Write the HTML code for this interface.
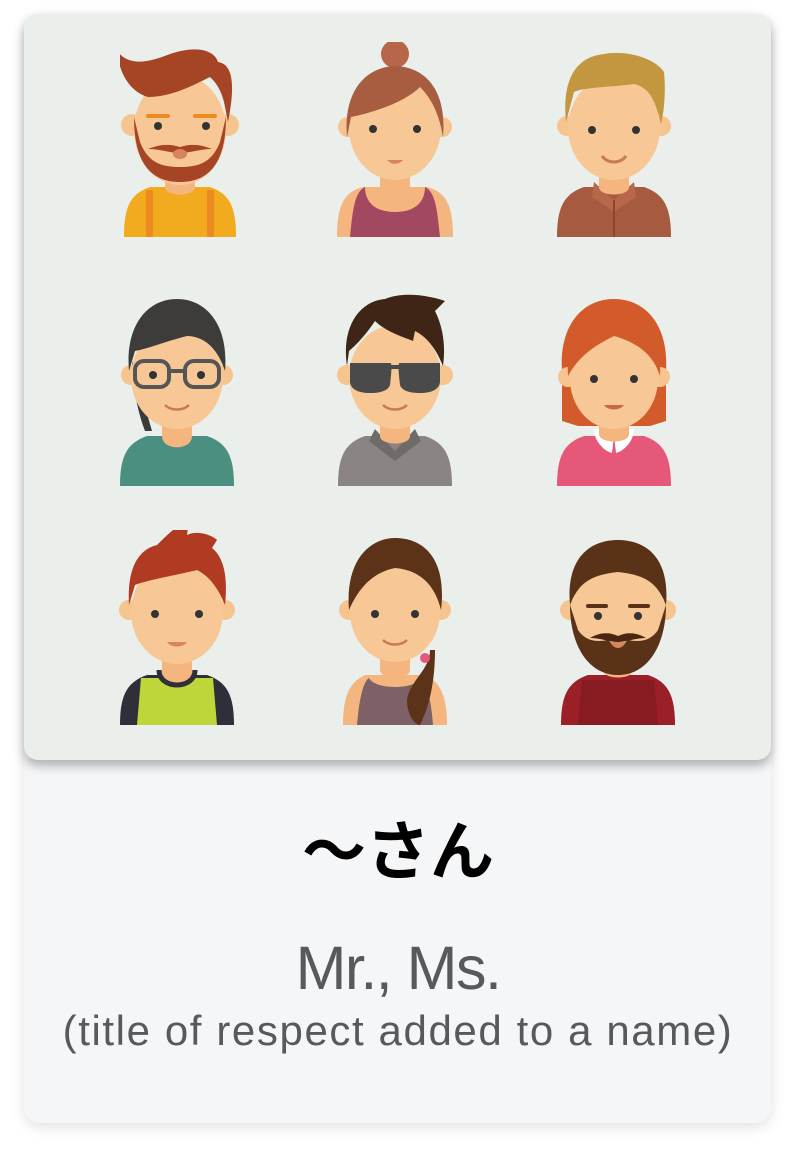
<!DOCTYPE html>
<html><head><meta charset="utf-8"><style>
body{margin:0;width:796px;height:1157px;background:#fff;position:relative;overflow:hidden;font-family:"Liberation Sans","Noto Sans CJK JP",sans-serif}
.card{position:absolute;left:24px;top:14px;width:747px;height:1109px;border-radius:16px;background:#f5f6f8;box-shadow:0 4px 14px rgba(0,0,0,.12)}
.top{position:absolute;left:24px;top:14px;width:747px;height:746px;border-radius:14px;background:#ebefec;box-shadow:0 6px 10px rgba(0,0,0,.28)}
svg.av{position:absolute;width:120px;height:195px}
.t1{position:absolute;left:0;width:796px;text-align:center;top:820px;font-size:64px;font-weight:bold;color:#000;line-height:1}
.t2{position:absolute;left:0;width:796px;text-align:center;top:938px;font-size:61px;color:#58595b;line-height:1;letter-spacing:-1.5px}
.t3{position:absolute;left:0;width:796px;text-align:center;top:1010px;font-size:42px;color:#58595b;line-height:1;letter-spacing:1.6px}
</style></head><body>
<div class="card"></div>
<div class="top"></div>

<!-- Row 1 -->
<svg class="av" style="left:120px;top:42px" viewBox="0 0 120 195">
<path d="M4 195C4 165 10 152 30 145L90 145C110 152 116 165 116 195Z" fill="#f2ab1f"/>
<rect x="26" y="148" width="7" height="47" fill="#ee8a22"/><rect x="87" y="148" width="7" height="47" fill="#ee8a22"/>
<path d="M45 118h30v27c0 10-30 10-30 0z" fill="#f5b57e"/>
<circle cx="12" cy="83" r="11" fill="#f6c48f"/><circle cx="108" cy="83" r="11" fill="#f6c48f"/>
<ellipse cx="60" cy="88" rx="46" ry="55" fill="#f7c895"/>
<path d="M14 75C14 120 30 140 60 140C90 140 106 120 106 75L100 100C92 120 80 125 60 125C40 125 28 120 20 100Z" fill="#a64426"/>
<path d="M-2 10C10 25 30 20 50 12C80 2 95 10 98 20C112 22 116 40 108 80L104 60C100 45 95 40 90 35C70 45 50 55 28 55C10 50 -2 30 -2 10Z" fill="#a64426"/>
<path d="M28 107c10-4 20-6 32-2c12-4 22-2 32 2c-12 0-22 4-32 4c-10 0-20-4-32-4z" fill="#a64426"/>
<ellipse cx="60" cy="112" rx="7" ry="5" fill="#d9845f"/>
<circle cx="38" cy="84" r="4" fill="#333"/><circle cx="86" cy="84" r="4" fill="#333"/>
<rect x="26" y="72" width="24" height="4" rx="2" fill="#ee8a22"/><rect x="73" y="72" width="24" height="4" rx="2" fill="#ee8a22"/>
</svg>

<svg class="av" style="left:335px;top:42px" viewBox="0 0 120 195">
<path d="M2 195C2 165 8 150 28 145L92 145C112 150 118 165 118 195Z" fill="#f5b57e"/>
<path d="M15 195C18 165 20 150 30 145C30 160 40 170 60 170C80 170 90 160 90 145C100 150 102 165 105 195Z" fill="#a34861"/>
<path d="M45 118h30v27c0 10-30 10-30 0z" fill="#f5b57e"/>
<circle cx="13" cy="85" r="10" fill="#f6c48f"/><circle cx="107" cy="85" r="10" fill="#f6c48f"/>
<ellipse cx="60" cy="86" rx="46" ry="52" fill="#f7c895"/>
<circle cx="60" cy="12" r="14" fill="#b8664a"/>
<path d="M12 95C8 50 30 25 60 24C92 25 112 50 108 95C104 70 95 55 85 45C70 60 40 70 16 75Z" fill="#a85c40"/>
<circle cx="38" cy="87" r="4" fill="#333"/><circle cx="82" cy="87" r="4" fill="#333"/>
<path d="M52 118c4 5 12 5 16 0z" fill="#d9845f"/>
</svg>

<svg class="av" style="left:554px;top:42px" viewBox="0 0 120 195">
<path d="M3 195C3 165 10 152 30 145L90 145C110 152 117 165 117 195Z" fill="#a65a40"/>
<path d="M40 140L60 158L80 140L82 155L60 170L38 155Z" fill="#b8674a"/>
<rect x="59" y="158" width="2" height="37" fill="#8c4530"/>
<path d="M45 118h30v27c0 10-30 10-30 0z" fill="#f5b57e"/>
<circle cx="13" cy="84" r="10" fill="#f6c48f"/><circle cx="107" cy="84" r="10" fill="#f6c48f"/>
<ellipse cx="60" cy="86" rx="46" ry="52" fill="#f7c895"/>
<path d="M12 80C8 40 20 15 50 12C70 8 100 15 110 30C112 50 110 70 107 82C102 60 95 45 80 42C60 45 30 45 20 50Z" fill="#c39640"/>
<circle cx="38" cy="88" r="4" fill="#333"/><circle cx="82" cy="88" r="4" fill="#333"/>
<path d="M48 114c6 8 18 8 24 0" stroke="#c77a55" stroke-width="3" fill="none"/>
</svg>

<!-- Row 2 -->
<svg class="av" style="left:117px;top:291px" viewBox="0 0 120 195">
<path d="M3 195C3 165 10 152 30 145L90 145C110 152 117 165 117 195Z" fill="#4a8f80"/>
<path d="M45 118h30v27c0 15-30 15-30 0z" fill="#f5b57e"/>
<circle cx="14" cy="84" r="10" fill="#f6c48f"/><circle cx="106" cy="84" r="10" fill="#f6c48f"/>
<path d="M28 140C20 120 15 90 15 70L35 140Z" fill="#3a3a3a"/>
<ellipse cx="60" cy="86" rx="46" ry="52" fill="#f7c895"/>
<path d="M12 80C8 35 30 8 60 8C90 8 112 35 108 80C100 55 85 45 70 45C50 50 30 58 18 60Z" fill="#3d3c3b"/>
<g fill="none" stroke="#555" stroke-width="4"><rect x="18" y="70" width="34" height="26" rx="9"/><rect x="68" y="70" width="34" height="26" rx="9"/><path d="M52 80h16"/></g>
<circle cx="36" cy="84" r="4" fill="#333"/><circle cx="84" cy="84" r="4" fill="#333"/>
<path d="M48 114c6 6 18 6 24 0" stroke="#c77a55" stroke-width="2.5" fill="none"/>
</svg>

<svg class="av" style="left:335px;top:291px" viewBox="0 0 120 195">
<path d="M3 195C3 165 10 152 30 145L90 145C110 152 117 165 117 195Z" fill="#8a8582"/>
<path d="M40 138L60 160L80 138L86 150L60 170L34 150Z" fill="#6f6b69"/>
<path d="M45 118h30v27c0 10-30 10-30 0z" fill="#f5b57e"/>
<circle cx="12" cy="84" r="10" fill="#f6c48f"/><circle cx="108" cy="84" r="10" fill="#f6c48f"/>
<ellipse cx="60" cy="86" rx="46" ry="52" fill="#f7c895"/>
<path d="M12 75C6 35 25 10 50 8C70 0 95 5 110 10L100 20C110 40 110 60 108 75C100 55 90 45 80 40L78 50C65 45 50 40 40 30C30 45 20 55 14 60Z" fill="#3f2516"/>
<path d="M15 72h40c2 0 2 4 0 22c-2 6-10 8-20 8c-12 0-20-4-20-12zM65 72h40v18c0 8-8 12-20 12c-10 0-18-2-20-8c-2-18-2-22 0-22z" fill="#4a4a4a"/>
<rect x="50" y="74" width="20" height="4" fill="#4a4a4a"/>
<path d="M48 114c6 6 18 6 24 0" stroke="#c77a55" stroke-width="2.5" fill="none"/>
</svg>

<svg class="av" style="left:554px;top:291px" viewBox="0 0 120 195">
<path d="M3 195C3 165 10 152 30 145L90 145C110 152 117 165 117 195Z" fill="#e6587a"/>
<path d="M40 138C40 150 50 160 58 162L60 145L62 162C70 160 80 150 80 138Z" fill="#fff"/>
<path d="M45 118h30v25c0 10-30 10-30 0z" fill="#f5b57e"/>
<path d="M8 80C5 35 28 8 60 8C92 8 115 35 112 80L112 130L96 135L24 135L8 130Z" fill="#d35a2a"/>
<circle cx="14" cy="86" r="10" fill="#f6c48f"/><circle cx="106" cy="86" r="10" fill="#f6c48f"/>
<ellipse cx="60" cy="88" rx="44" ry="50" fill="#f7c895"/>
<path d="M14 85C12 50 30 30 60 28C90 30 108 50 106 85C100 65 85 52 60 45C40 55 25 65 14 85Z" fill="#d35a2a"/>
<circle cx="40" cy="88" r="4" fill="#333"/><circle cx="80" cy="88" r="4" fill="#333"/>
<path d="M50 114c4 6 16 6 20 0z" fill="#c46a4a"/>
</svg>

<!-- Row 3 -->
<svg class="av" style="left:117px;top:530px" viewBox="0 0 120 195">
<path d="M3 195C3 165 10 152 30 145L90 145C110 152 117 165 117 195Z" fill="#2f2f3a"/>
<path d="M20 195L24 148L96 148L100 195Z" fill="#bfd63a"/>
<path d="M42 140C42 160 78 160 78 140" stroke="#2f2f3a" stroke-width="5" fill="#f5b57e"/>
<path d="M45 115h30v25c0 10-30 10-30 0z" fill="#f5b57e"/>
<circle cx="12" cy="80" r="10" fill="#f6c48f"/><circle cx="108" cy="80" r="10" fill="#f6c48f"/>
<ellipse cx="60" cy="82" rx="46" ry="52" fill="#f7c895"/>
<path d="M12 75C10 40 20 20 40 15C50 5 60 -5 72 -10L70 5C80 0 95 5 100 10L95 18C110 30 110 55 108 75C100 55 90 45 80 40C60 45 30 50 18 55Z" fill="#b03b22"/>
<circle cx="38" cy="84" r="4" fill="#333"/><circle cx="82" cy="84" r="4" fill="#333"/>
<path d="M50 112c4 6 16 6 20 0z" fill="#d9845f"/>
</svg>

<svg class="av" style="left:335px;top:530px" viewBox="0 0 120 195">
<path d="M8 195C8 165 15 152 30 145L90 145C105 152 112 165 112 195Z" fill="#f5b57e"/>
<path d="M22 195C24 170 28 152 34 148C40 160 80 160 86 148C92 152 96 170 98 195Z" fill="#7e6167"/>
<path d="M45 115h30v25c0 10-30 10-30 0z" fill="#f5b57e"/>
<circle cx="14" cy="80" r="10" fill="#f6c48f"/><circle cx="106" cy="80" r="10" fill="#f6c48f"/>
<ellipse cx="60" cy="82" rx="45" ry="50" fill="#f7c895"/>
<path d="M14 80C10 30 35 8 60 8C90 8 112 30 106 80C100 55 85 40 60 38C40 42 25 55 14 80Z" fill="#5c3219"/>
<path d="M95 120C95 140 75 150 72 170C72 185 80 195 85 195C95 175 100 150 100 120Z" fill="#5c3219"/>
<circle cx="90" cy="128" r="5" fill="#e6587a"/>
<circle cx="40" cy="84" r="4" fill="#333"/><circle cx="80" cy="84" r="4" fill="#333"/>
<path d="M48 110c6 6 18 6 24 0" stroke="#c77a55" stroke-width="2.5" fill="none"/>
</svg>

<svg class="av" style="left:558px;top:530px" viewBox="0 0 120 195">
<path d="M3 195C3 165 10 152 30 145L90 145C110 152 117 165 117 195Z" fill="#9a1f26"/>
<path d="M20 195L24 150L96 150L100 195Z" fill="#861b22"/>
<path d="M45 115h30v25c0 10-30 10-30 0z" fill="#f5b57e"/>
<circle cx="12" cy="80" r="10" fill="#f6c48f"/><circle cx="108" cy="80" r="10" fill="#f6c48f"/>
<ellipse cx="60" cy="82" rx="46" ry="52" fill="#f7c895"/>
<path d="M12 75C8 30 30 10 60 10C90 10 112 30 108 75C100 55 90 45 60 42C30 45 20 55 12 75Z" fill="#5a3218"/>
<path d="M12 75C12 115 30 145 60 145C90 145 108 115 108 75L100 100C92 112 80 112 70 110L60 118L50 110C40 112 28 112 20 100Z" fill="#5a3218"/>
<path d="M32 108c10-6 20-6 28-2c8-4 18-4 28 2c-10 0-20 4-28 4c-8 0-18-4-28-4z" fill="#4a2612"/>
<path d="M52 112c4 8 12 8 16 0z" fill="#d9845f"/>
<circle cx="40" cy="86" r="4" fill="#333"/><circle cx="80" cy="86" r="4" fill="#333"/>
<rect x="28" y="74" width="22" height="4" rx="2" fill="#5a3218"/><rect x="70" y="74" width="22" height="4" rx="2" fill="#5a3218"/>
</svg>

<div class="t1">～さん</div>
<div class="t2">Mr., Ms.</div>
<div class="t3">(title of respect added to a name)</div>
</body></html>
